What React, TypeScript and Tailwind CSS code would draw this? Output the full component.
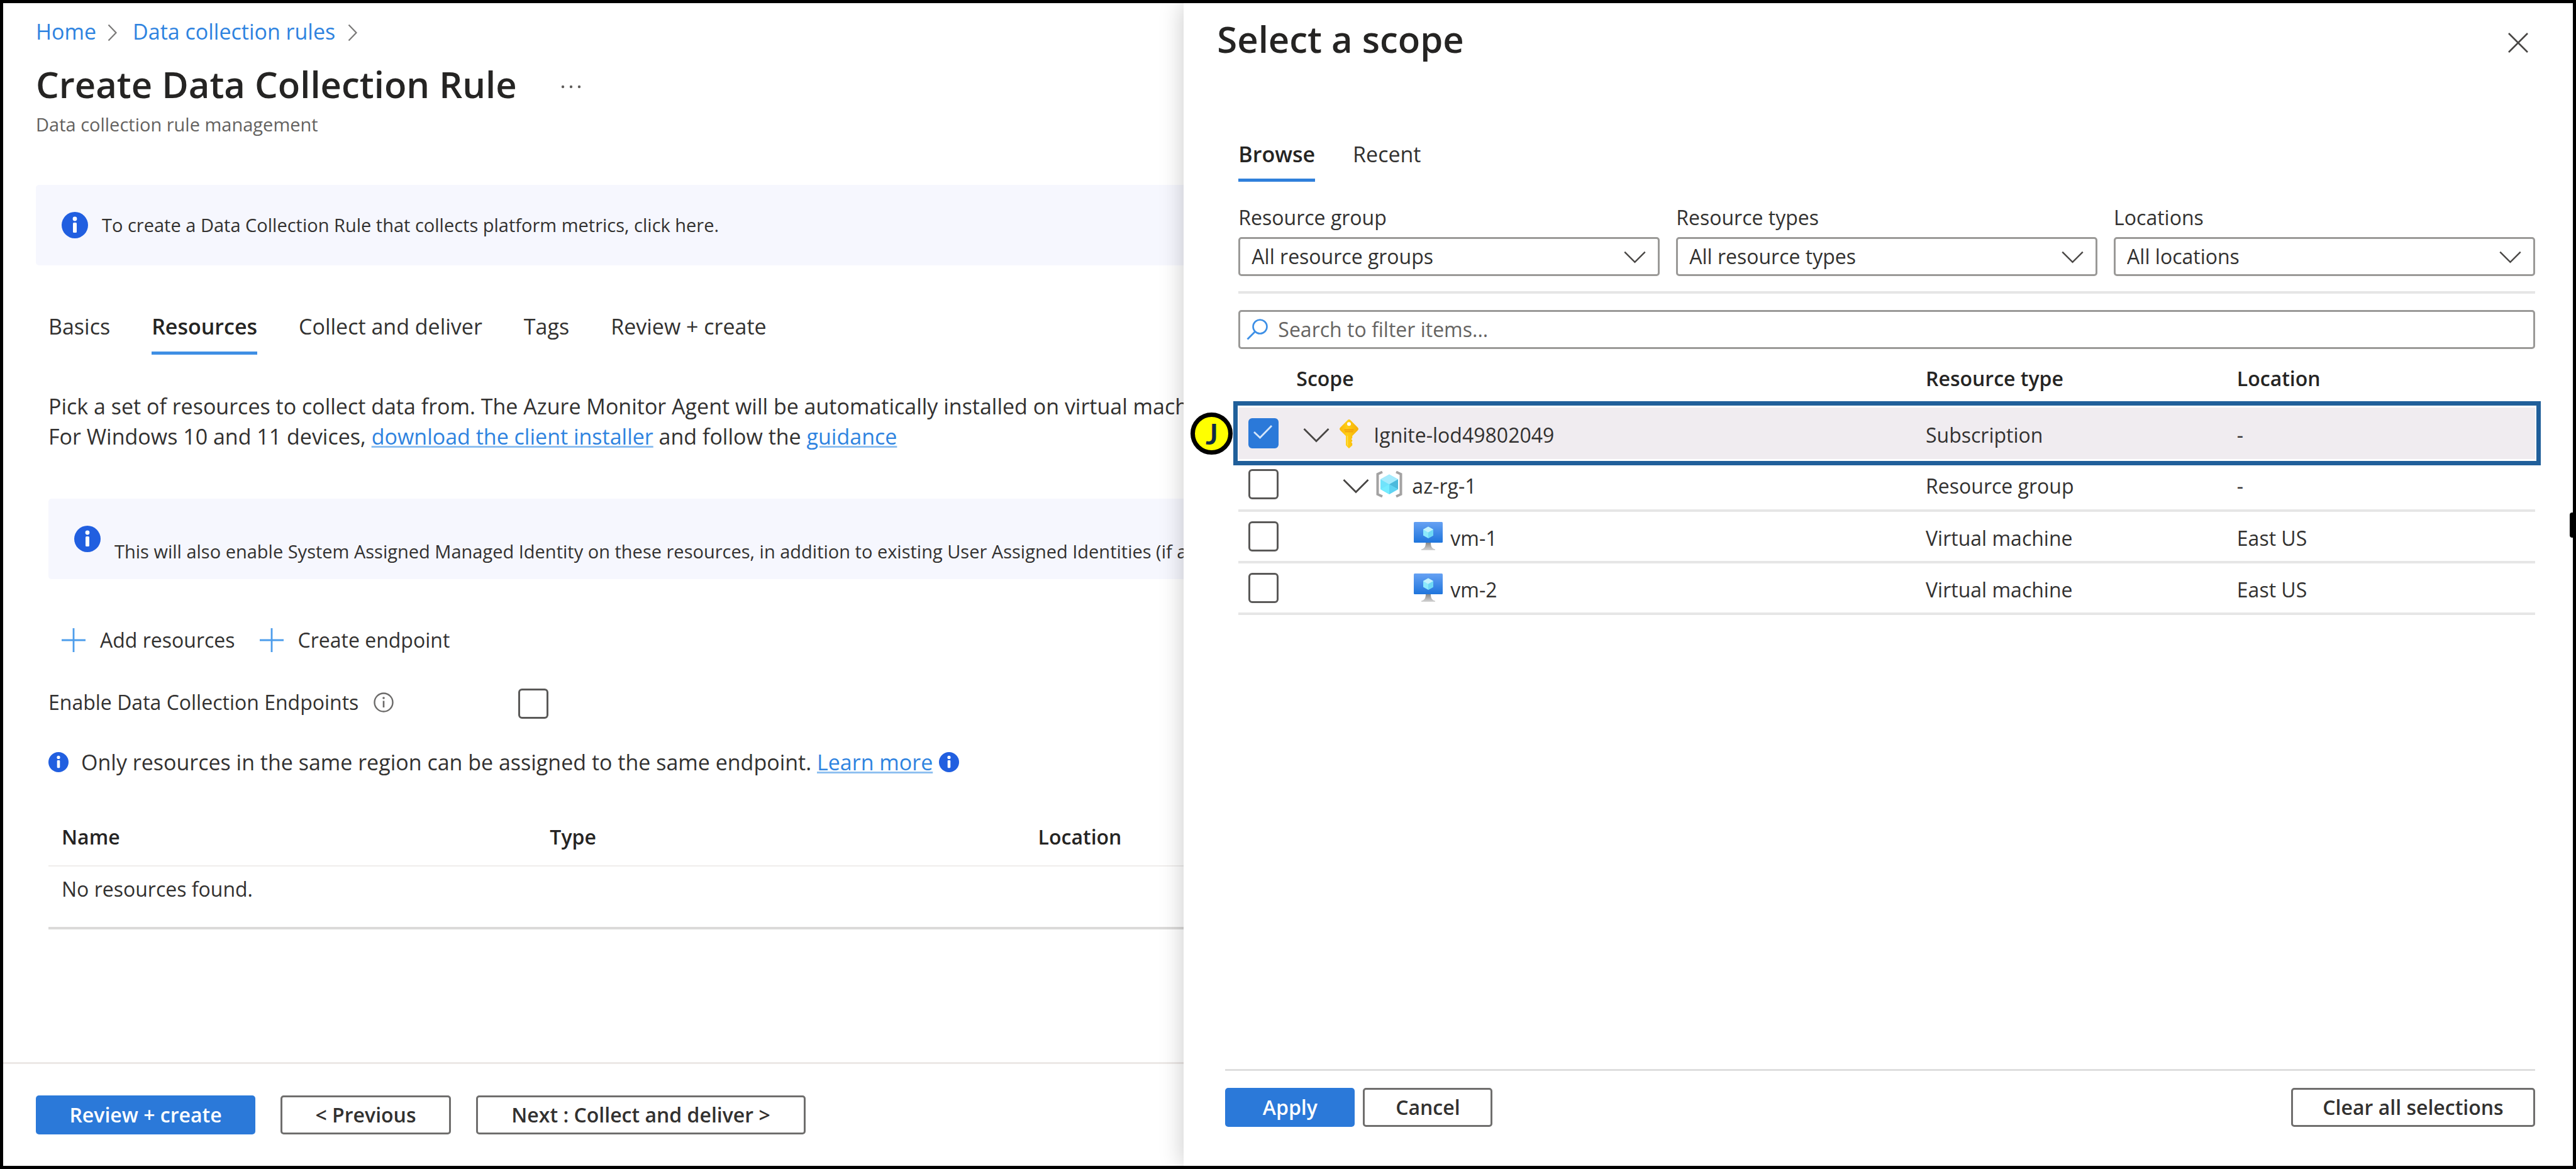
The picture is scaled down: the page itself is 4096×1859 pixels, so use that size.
import { useState } from "react";
import type { ReactNode } from "react";

function InfoDot({ className }: { className: string }) {
  return (
    <svg viewBox="0 0 42 42" className={className} aria-hidden="true">
      <circle cx="21" cy="21" r="21" fill="#215fe0" />
      <circle cx="21" cy="11" r="3.4" fill="#fff" />
      <rect x="18" y="17" width="6" height="16" rx="1.5" fill="#fff" />
    </svg>
  );
}

function InfoOutline() {
  return (
    <svg viewBox="0 0 32 32" className="size-8" fill="none" aria-hidden="true">
      <circle cx="16" cy="16" r="14.5" stroke="#6b6a69" strokeWidth="2.4" />
      <path d="M16 13.5V24" stroke="#6b6a69" strokeWidth="2.6" />
      <circle cx="16" cy="9" r="1.8" fill="#6b6a69" />
    </svg>
  );
}

function Crumb() {
  return (
    <svg viewBox="0 0 16 28" className="mt-1 h-7 w-4" fill="none" aria-hidden="true">
      <path d="M1.5 1.5 13.5 14 1.5 26.5" stroke="#7a7978" strokeWidth="2.2" />
    </svg>
  );
}

function Plus() {
  return (
    <svg viewBox="0 0 40 40" className="size-10" fill="none" aria-hidden="true">
      <path d="M20 1v38M1 20h38" stroke="#4d9deb" strokeWidth="2.8" />
    </svg>
  );
}

function ChevronDown({ className }: { className: string }) {
  return (
    <svg viewBox="0 0 42 24" className={className} fill="none" aria-hidden="true">
      <path d="M1.5 2 21 21.5 40.5 2" stroke="#484644" strokeWidth="2.8" />
    </svg>
  );
}

function KeyIcon() {
  return (
    <svg viewBox="0 0 30 46" className="mb-1 h-[46px] w-[30px]" aria-hidden="true">
      <defs>
        <linearGradient id="key-shaft" x1="0" x2="1" y1="0" y2="0">
          <stop offset="0" stopColor="#f9b70c" />
          <stop offset="0.4" stopColor="#ffce14" />
          <stop offset="1" stopColor="#f5ae08" />
        </linearGradient>
      </defs>
      <path
        d="M12.6 1.2a3.4 3.4 0 0 1 4.8 0l11.4 11.5a3.4 3.4 0 0 1 0 4.8l-8.6 8.7v3.3l-1.6 1.7 1.6 1.7v1.6l-1.6 1.7 1.6 1.7v3.4L15.6 45.6a1 1 0 0 1-1.4 0L10 41V26.2L1.2 17.5a3.4 3.4 0 0 1 0-4.8Z"
        fill="url(#key-shaft)"
      />
      <path d="M7.5 15.8h15v1.8h-15zM8.5 18.7h13v1.5h-13z" fill="#f09a06" />
      <path d="M12.5 26v15.5" stroke="#ffdf4a" strokeWidth="1.5" />
      <circle cx="15" cy="7.3" r="3" fill="#fff" />
    </svg>
  );
}

function ResourceGroupIcon() {
  return (
    <svg viewBox="0 0 44 44" className="mb-1.5 size-11" fill="none" aria-hidden="true">
      <path d="M11 2.5 3.5 6v32l7.5 3.5M33 2.5 40.5 6v32L33 41.5" stroke="#a3a2a2" strokeWidth="4" />
      <path d="M22 6.5 36 14.3v15.6L22 38 8 29.900V14.3Z" fill="#6fe3fb" />
      <path d="M22 6.5 36 14.3 22 22.2 8 14.3Z" fill="#a5ebfd" />
      <path d="M36 14.3v15.6L22 22.2Z" fill="#4cb9dc" />
      <path d="M22 22.2 36 29.900 22 38Z" fill="#5fd3f2" />
      <path d="M22 22.2 8 29.900 22 38Z" fill="#74ecff" />
    </svg>
  );
}

function VmIcon() {
  return (
    <svg viewBox="0 0 46 46" className="mb-1.5 size-[46px]" aria-hidden="true">
      <defs>
        <linearGradient id="vm-screen" x1="0" x2="0" y1="0" y2="1">
          <stop offset="0" stopColor="#66a1f3" />
          <stop offset="1" stopColor="#1f75dc" />
        </linearGradient>
        <linearGradient id="vm-stand" x1="0" x2="0" y1="0" y2="1">
          <stop offset="0" stopColor="#8a8a8a" />
          <stop offset="1" stopColor="#d4d4d4" />
        </linearGradient>
      </defs>
      <path d="M19 33h8c0 6 2 9.500 7 10.500V45H12v-1.500c5-1 7-4.500 7-10.500Z" fill="url(#vm-stand)" />
      <rect width="46" height="33" rx="1.5" fill="url(#vm-screen)" />
      <path d="m23 7.5 8 4.500v9.500L23 26l-8-4.500V12Z" fill="#8ce9fb" />
      <path d="m23 7.5 8 4.500-8 4.700-8-4.700Z" fill="#c3f2fd" />
      <path d="M31 12v9.500L23 26v-9.300Z" fill="#6fd8f5" />
    </svg>
  );
}

function CheckBox({ id, label, checked = false }: { id: string; label: string; checked?: boolean }) {
  const [on, setOn] = useState(checked);
  return (
    <span className="relative block size-12">
      <input
        id={id}
        type="checkbox"
        aria-label={label}
        checked={on}
        onChange={() => setOn(!on)}
        className="block size-12 appearance-none rounded-md border-[3px] border-[#5a5958] bg-white checked:border-[#2b79d9] checked:bg-[#2b79d9]"
      />
      {on && (
        <svg viewBox="0 0 48 48" className="pointer-events-none absolute inset-0 size-12" fill="none" aria-hidden="true">
          <path d="m9 22 9.500 9L37 12" stroke="#d5e6fa" strokeWidth="2.8" />
        </svg>
      )}
    </span>
  );
}

const primaryButton =
  "h-[62px] rounded-[5px] bg-[#2b79d9] text-center text-[32px] leading-[44px] font-semibold text-white";
const plainButton =
  "h-[62px] rounded-[5px] border-[3px] border-[#6f6e6d] bg-white text-center text-[32px] leading-[44px] font-semibold text-[#323130]";

function Banner({ children, low = false }: { children: ReactNode; low?: boolean }) {
  return (
    <div className="flex h-32 items-center gap-[22px] rounded-l-[5px] bg-[#f6f7fe] pl-[41px] text-[29px] leading-10 whitespace-nowrap">
      <InfoDot className="size-[42px] shrink-0" />
      <p className={low ? "pt-10" : ""}>{children}</p>
    </div>
  );
}

function TextLink({ children }: { children: ReactNode }) {
  return (
    <a
      href="#"
      className="text-[#2e83e0] underline decoration-[#8fc0f0] decoration-[3px] underline-offset-2"
    >
      {children}
    </a>
  );
}

const wizardTabs = ["Basics", "Resources", "Collect and deliver", "Tags", "Review + create"];

function RulePage() {
  return (
    <main className="flex min-w-0 flex-col overflow-hidden bg-white">
      <div className="flex-1 pt-[21px] pl-[52px]">
        <nav aria-label="Breadcrumb" className="flex h-12 items-center text-[34px] leading-[48px] text-[#2e83e0]">
          <a href="#" className="mr-[18px]">Home</a>
          <Crumb />
          <a href="#" className="mr-[20px] ml-[24px]">Data collection rules</a>
          <Crumb />
        </nav>
        <div className="mt-6 flex h-[72px] items-center gap-[70px]">
          <h1 className="text-[58px] leading-[72px] font-semibold whitespace-nowrap text-[#252423]">
            Create Data Collection Rule
          </h1>
          <button type="button" aria-label="More actions" className="mt-2">
            <svg viewBox="0 0 32 8" className="h-2 w-8" fill="#605e5c" aria-hidden="true">
              <circle cx="3" cy="4" r="2.2" />
              <circle cx="16" cy="4" r="2.2" />
              <circle cx="29" cy="4" r="2.2" />
            </svg>
          </button>
        </div>
        <p className="mt-2 text-[29px] leading-10 text-[#646260]">Data collection rule management</p>
        <div className="mt-[76px]">
          <Banner>To create a Data Collection Rule that collects platform metrics, click here.</Banner>
        </div>

        <div className="pl-5">
          <div role="tablist" className="mt-[72px] flex gap-[66px] text-[34px] leading-[50px]">
            {wizardTabs.map((tab) => (
              <button
                key={tab}
                type="button"
                role="tab"
                aria-selected={tab === "Resources"}
                className={
                  tab === "Resources"
                    ? "border-b-[5px] border-[#3f8fe4] pb-[15px] font-semibold text-[#252423]"
                    : "border-b-[5px] border-transparent pb-[15px]"
                }
              >
                {tab}
              </button>
            ))}
          </div>

          <p className="mt-[58px] text-[34px] leading-[48px] whitespace-nowrap">
            Pick a set of resources to collect data from. The Azure Monitor Agent will be automatically installed on virtual machines
            <br />
            For Windows 10 and 11 devices, <TextLink>download the client installer</TextLink> and follow the{" "}
            <TextLink>guidance</TextLink>
          </p>

          <div className="mt-[75px]">
            <Banner low>
              This will also enable System Assigned Managed Identity on these resources, in addition to existing User
              Assigned Identities (if any).
            </Banner>
          </div>

          <div className="mt-[73px] flex h-12 items-center gap-[38px] pl-5 text-[32px] leading-[44px]">
            <button type="button" className="flex items-center gap-[22px]">
              <Plus />
              Add resources
            </button>
            <button type="button" className="flex items-center gap-[22px]">
              <Plus />
              Create endpoint
            </button>
          </div>

          <div className="mt-[53px] flex h-12 items-center text-[32px] leading-[44px]">
            <div className="flex w-[747px] items-center gap-6 pb-1">
              <label htmlFor="endpoints">Enable Data Collection Endpoints</label>
              <InfoOutline />
            </div>
            <CheckBox id="endpoints" label="Enable Data Collection Endpoints" />
          </div>

          <div className="mt-[45px] flex h-12 items-center text-[34px] leading-[48px] whitespace-nowrap">
            <InfoDot className="mr-5 size-8" />
            <p>
              Only resources in the same region can be assigned to the same endpoint. <TextLink>Learn more</TextLink>
            </p>
            <InfoDot className="ml-2.5 size-8" />
          </div>

          <table className="mt-[50px] w-full table-fixed border-b-4 border-[#dbdad9] text-left text-[32px] leading-[44px]">
            <thead>
              <tr className="h-[91px] border-b-2 border-[#efedec] text-[#252423]">
                <th className="w-[43%] pl-[21px] font-semibold">Name</th>
                <th className="w-[43%] pl-[21px] font-semibold">Type</th>
                <th className="pl-[21px] font-semibold">Location</th>
              </tr>
            </thead>
            <tbody>
              <tr>
                <td colSpan={3} className="pt-[14px] pb-[38px] pl-[21px]">
                  No resources found.
                </td>
              </tr>
            </tbody>
          </table>
        </div>
      </div>

      <footer className="flex gap-10 border-t-[3px] border-[#ece8e6] py-[50px] pl-[52px]">
        <button type="button" className={`${primaryButton} w-[349px]`}>Review + create</button>
        <button type="button" className={`${plainButton} w-[271px]`}>&lt; Previous</button>
        <button type="button" className={`${plainButton} w-[524px]`}>Next : Collect and deliver &gt;</button>
      </footer>
    </main>
  );
}

const filters = [
  { id: "group", label: "Resource group", value: "All resource groups" },
  { id: "types", label: "Resource types", value: "All resource types" },
  { id: "locations", label: "Locations", value: "All locations" },
];

type Row = { name: string; type: string; location: string; level: 0 | 1 | 2 };

const rows: Row[] = [
  { name: "Ignite-lod49802049", type: "Subscription", location: "-", level: 0 },
  { name: "az-rg-1", type: "Resource group", location: "-", level: 1 },
  { name: "vm-1", type: "Virtual machine", location: "East US", level: 2 },
  { name: "vm-2", type: "Virtual machine", location: "East US", level: 2 },
];

function ScopeName({ row }: { row: Row }) {
  if (row.level === 0) {
    return (
      <div className="flex items-center pl-[11px]">
        <button type="button" aria-label="Collapse subscription" className="mr-4">
          <ChevronDown className="h-6 w-[42px]" />
        </button>
        <KeyIcon />
        <span className="ml-6">{row.name}</span>
      </div>
    );
  }
  if (row.level === 1) {
    return (
      <div className="flex items-center pl-[74px]">
        <button type="button" aria-label="Collapse resource group" className="mr-2.5">
          <ChevronDown className="h-6 w-[42px]" />
        </button>
        <ResourceGroupIcon />
        <span className="ml-3.5">{row.name}</span>
      </div>
    );
  }
  return (
    <div className="flex items-center pl-[187px]">
      <VmIcon />
      <span className="ml-3">{row.name}</span>
    </div>
  );
}

function ScopePanel() {
  return (
    <aside
      aria-label="Select a scope"
      className="relative flex min-w-0 flex-col bg-white shadow-[0_0_36px_rgba(0,0,0,0.22)]"
    >
      <header className="flex h-[93px] items-center justify-between pt-[21px] pr-[71px] pl-[53px]">
        <h2 className="text-[58px] leading-[72px] font-semibold text-[#252423]">Select a scope</h2>
        <button type="button" aria-label="Close" className="mt-3">
          <svg viewBox="0 0 32 32" className="size-8" fill="none" aria-hidden="true">
            <path d="M1 1l30 30M31 1 1 31" stroke="#484644" strokeWidth="2.6" />
          </svg>
        </button>
      </header>

      <div className="flex-1 pr-[60px] pl-[87px]">
        <div role="tablist" className="mt-[122px] flex gap-[60px] text-[34px] leading-[50px]">
          <button
            type="button"
            role="tab"
            aria-selected="true"
            className="border-b-[5px] border-[#2f80db] pb-[14px] font-semibold text-[#252423]"
          >
            Browse
          </button>
          <button type="button" role="tab" aria-selected="false" className="border-b-[5px] border-transparent pb-[14px]">
            Recent
          </button>
        </div>

        <div className="mt-[35px] grid grid-cols-3 gap-[26px] border-b-4 border-[#e6e6e6] pb-6 text-[32px] leading-[44px]">
          {filters.map((filter) => (
            <div key={filter.id}>
              <label htmlFor={filter.id} className="block">
                {filter.label}
              </label>
              <div className="relative mt-[9px]">
                <select
                  id={filter.id}
                  className="block h-[62px] w-full appearance-none rounded-[5px] border-[3px] border-[#9a9997] bg-white pl-[18px]"
                >
                  <option>{filter.value}</option>
                </select>
                <ChevronDown className="pointer-events-none absolute top-[22px] right-[22px] h-[20px] w-[35px]" />
              </div>
            </div>
          ))}
        </div>

        <label className="mt-[26px] flex h-[62px] items-center rounded-[5px] border-[3px] border-[#9a9997] pl-2.5">
          <svg viewBox="0 0 34 34" className="size-[34px]" fill="none" aria-hidden="true">
            <circle cx="21.5" cy="12.5" r="11" stroke="#3c8fe6" strokeWidth="2.6" />
            <path d="M13.5 20.5 1.5 32.5" stroke="#3c8fe6" strokeWidth="2.8" />
          </svg>
          <input
            type="text"
            aria-label="Search to filter items"
            placeholder="Search to filter items..."
            className="ml-4 flex-1 bg-transparent text-[32px] leading-[44px] outline-none placeholder:text-[#666462]"
          />
        </label>

        <table className="w-full table-fixed text-left text-[32px] leading-[44px]">
          <thead>
            <tr className="h-[93px] text-[#252423]">
              <th className="w-[92px]" aria-label="Selection" />
              <th className="font-semibold">Scope</th>
              <th className="w-[24%] font-semibold">Resource type</th>
              <th className="w-[23%] font-semibold">Location</th>
            </tr>
          </thead>
          <tbody>
            {rows.map((row) => (
              <tr
                key={row.name}
                className={row.level === 0 ? "relative h-[82px] bg-[#f0ecf0]" : "h-[82px] border-b-4 border-[#e6e6e6]"}
              >
                <td className="pl-4">
                  <CheckBox id={row.name} label={row.name} checked={row.level === 0} />
                  {row.level === 0 && (
                    <>
                      <span className="pointer-events-none absolute -top-[10px] -right-[9px] -bottom-[10px] -left-[8px] border-[7px] border-[#205f9a]" />
                      <span className="absolute top-2 -left-[76px] flex size-[67px] items-center justify-center rounded-full border-[7px] border-black bg-[#ffff00] font-['Lato'] text-[46px] leading-none font-bold text-[#0f2a47]">
                        J
                      </span>
                    </>
                  )}
                </td>
                <td className="pt-1.5">
                  <ScopeName row={row} />
                </td>
                <td className="pt-1.5">{row.type}</td>
                <td className="pt-1.5">{row.location}</td>
              </tr>
            ))}
          </tbody>
        </table>
      </div>

      <footer className="pr-[60px] pb-[62px] pl-[66px]">
        <div className="flex gap-[13px] border-t-[3px] border-[#dedede] pt-[27px]">
          <button type="button" className={`${primaryButton} w-[206px]`}>Apply</button>
          <button type="button" className={`${plainButton} w-[206px]`}>Cancel</button>
          <button type="button" className={`${plainButton} ml-auto w-[388px]`}>Clear all selections</button>
        </div>
      </footer>
    </aside>
  );
}

export default function App() {
  return (
    <div className="relative grid min-h-screen grid-cols-[17fr_20fr] overflow-hidden border-[5px] border-black bg-white font-['Open_Sans','Noto_Sans',sans-serif] text-[#323130]">
      <RulePage />
      <ScopePanel />
      <span className="absolute top-[810px] right-0 h-10 w-[5px] rounded-l-[4px] bg-black" />
    </div>
  );
}
